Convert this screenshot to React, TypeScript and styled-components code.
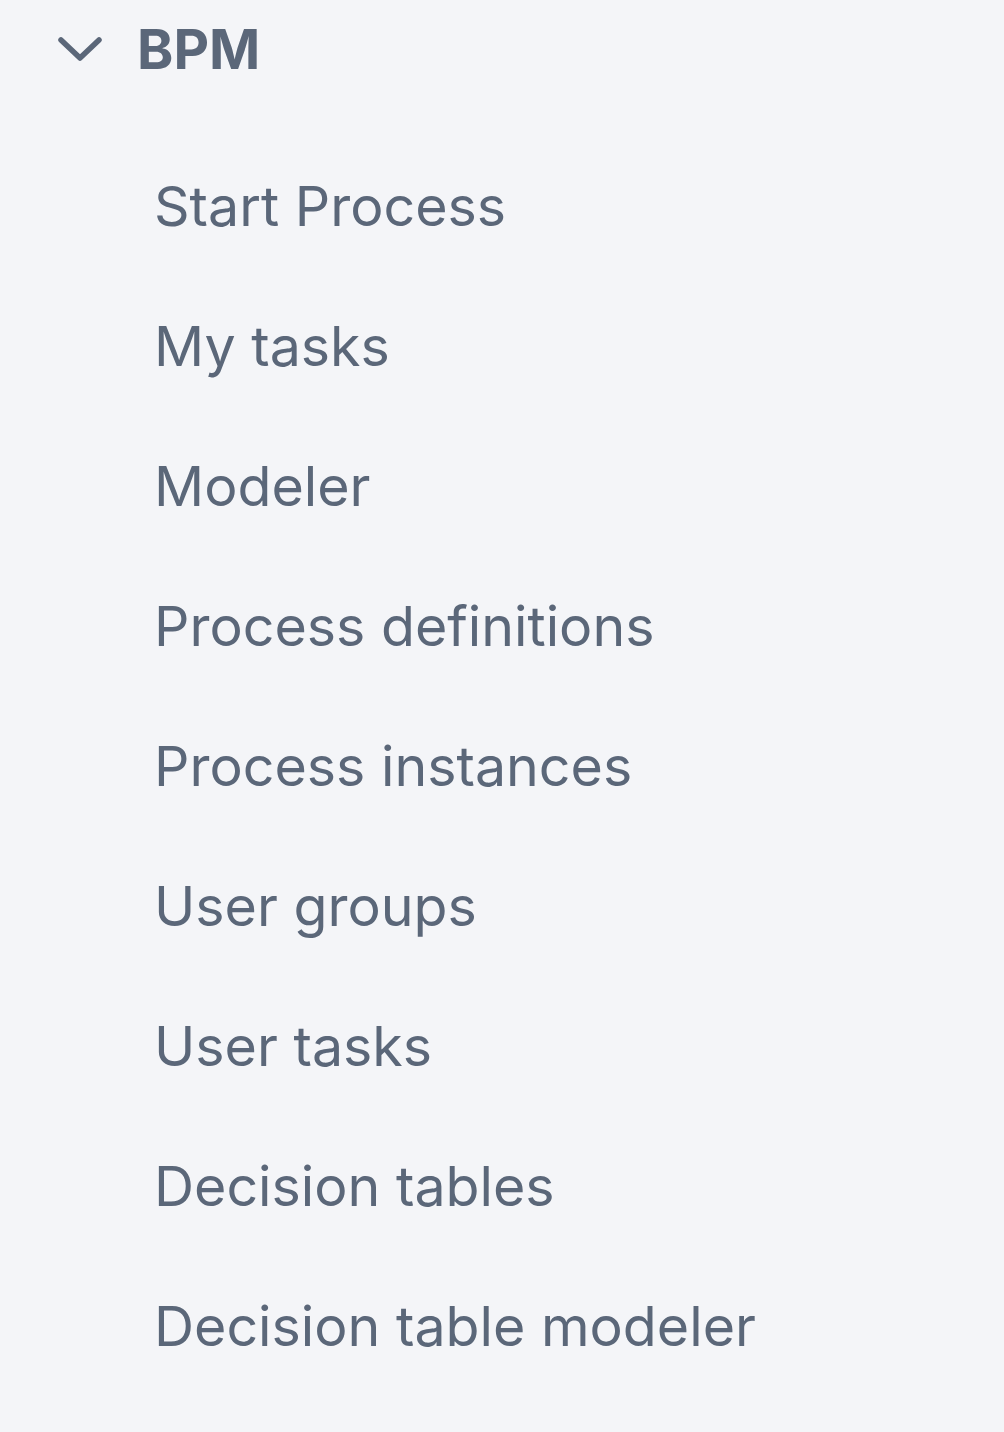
import styled, { createGlobalStyle } from 'styled-components';

const GlobalStyle = createGlobalStyle`
  html, body {
    margin: 0;
    padding: 0;
    background: #f4f5f8;
  }
  body {
    font-family: Inter, "Noto Sans", sans-serif;
    -webkit-font-smoothing: antialiased;
  }
`;

const Sidebar = styled.nav`
  width: 1004px;
  min-height: 1432px;
  background: #f4f5f8;
  color: #5b6779;
  box-sizing: border-box;
  padding-top: 9px;
`;

const GroupHeader = styled.div`
  display: flex;
  align-items: center;
  height: 80px;
  padding-left: 57px;
  gap: 34px;
  font-size: 55px;
  font-weight: 700;
`;

const Chevron = styled.svg`
  width: 46px;
  height: 30px;
  flex-shrink: 0;
`;

const ItemList = styled.ul`
  list-style: none;
  margin: 0;
  padding: 89px 0 0 154px;
  display: flex;
  flex-direction: column;
`;

const Item = styled.li`
  height: 140px;
  display: flex;
  align-items: flex-start;
  font-size: 55.5px;
  font-weight: 400;
  line-height: 1;
  cursor: pointer;
`;

const items = [
  'Start Process',
  'My tasks',
  'Modeler',
  'Process definitions',
  'Process instances',
  'User groups',
  'User tasks',
  'Decision tables',
  'Decision table modeler',
];

export default function App() {
  return (
    <>
      <GlobalStyle />
      <Sidebar>
        <GroupHeader>
          <Chevron viewBox="0 0 46 30" fill="none">
            <path d="M4 6 L23 24 L42 6" stroke="#5b6779" strokeWidth="5.5" strokeLinecap="round" strokeLinejoin="round" />
          </Chevron>
          <span>BPM</span>
        </GroupHeader>
        <ItemList>
          {items.map((label) => (
            <Item key={label}>{label}</Item>
          ))}
        </ItemList>
      </Sidebar>
    </>
  );
}
